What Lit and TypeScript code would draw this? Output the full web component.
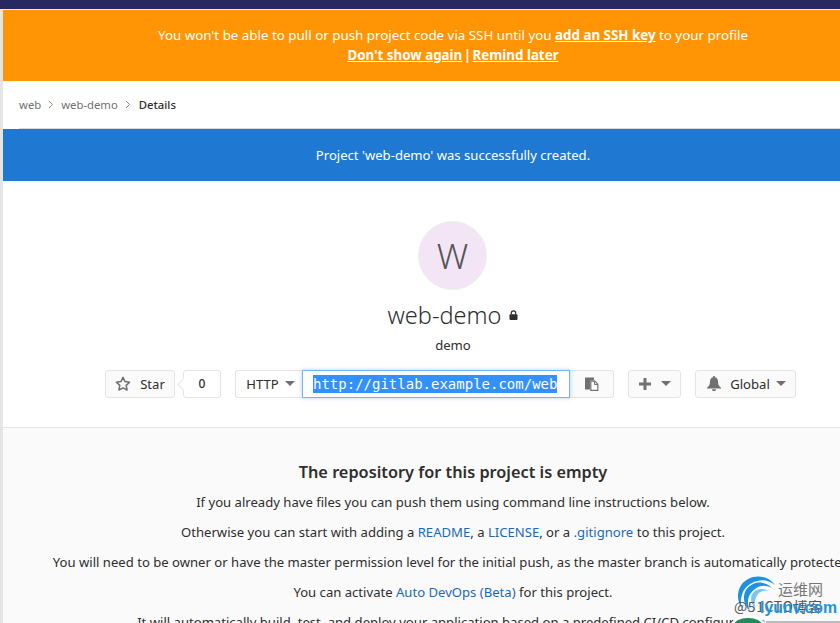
import { LitElement, html, css } from "lit";
import { customElement } from "lit/decorators.js";

const caret = html`<svg class="caret" width="10" height="5" viewBox="0 0 10 5"><path d="M0 0h10L5 5z" fill="#707070"/></svg>`;

@customElement("app-root")
export class AppRoot extends LitElement {
  static styles = css`
    :host { display: block; width: 840px; height: 623px; overflow: hidden; position: relative; background: #fff;
      font-family: "Noto Sans", "Open Sans", sans-serif; color: #2e2e2e; font-size: 13.1px; }
    .top { height: 9px; background: #292961; border-bottom: 1px solid #f0f0f0; }
    .page { width: 900px; margin-left: 3px; position: relative; }
    .edge { position: absolute; left: 0; top: 10px; width: 3px; height: 613px; background: #e5e5e5; }
    .warn { height: 71px; background: #ff9505; color: #fff; display: flex; flex-direction: column; align-items: center; width: 900px; padding-top: 15px; box-sizing: border-box; line-height: 20px; font-size: 13.35px; }
    .warn a { color: #fff; font-weight: 700; text-decoration: underline; }
    .pipe { margin: 0 -2px; font-weight: 700; }
    .crumbs { height: 48px; margin-left: 16px; width: 884px; box-sizing: border-box; border-bottom: 1px solid #d8d8d8; display: flex; align-items: center; gap: 6px; font-size: 11.3px; color: #707070; }
    .crumbs b { font-weight: 500; color: #2e2e2e; margin-left: 1px; }
    .chev { margin: 0 1px; }
    .flash { height: 52px; width: 900px; background: #1f78d1; color: #fff; display: flex; align-items: center; justify-content: center; }
    .head { height: 246px; display: flex; flex-direction: column; align-items: center; box-sizing: border-box; padding-top: 40px; }
    .avatar { box-sizing: border-box; width: 69px; height: 69px; border-radius: 50%; background: #f3e5f5; border: 1px solid #eee; color: #555; display: flex; align-items: center; justify-content: center; font-size: 35px; font-weight: 300; margin-right: 1px; }
    .title { display: flex; align-items: center; gap: 8px; font-size: 23.5px; line-height: 32px; margin-top: 9px; color: #2e2e2e; font-weight: 300; }
    .desc { margin-top: 4px; line-height: 20px; color: #2e2e2e; }
    .actions { display: flex; margin-top: 15px; height: 28px; margin-left: -5px; }
    .btn { box-sizing: border-box; height: 28px; display: flex; align-items: center; justify-content: center; border: 1px solid #e5e5e5; border-radius: 3px; background: #fafafa; color: #2e2e2e; font-size: 13.1px; padding-bottom: 1px; }
    .star { width: 70px; gap: 9px; }
    .count { width: 38px; margin-left: 8px; background: #fff; position: relative; font-size: 12px; font-weight: 500; }
    .count::before { content: ""; position: absolute; left: -5px; top: 9px; width: 8px; height: 8px; background: #fff; border-left: 1px solid #e5e5e5; border-bottom: 1px solid #e5e5e5; transform: rotate(45deg); }
    .http { width: 67px; margin-left: 14px; gap: 6px; background: #fff; border-radius: 3px 0 0 3px; border-right: none; padding-left: 3px; }
    .url { box-sizing: border-box; width: 268px; height: 28px; border: 1px solid #73b5f5; box-shadow: 0 0 4px rgba(31,120,209,.35); background: #fff; display: flex; align-items: center; padding-left: 10px; font-family: "DejaVu Sans Mono", monospace; font-size: 14px; color: #fff; position: relative; overflow: hidden; white-space: nowrap; }
    .url span { background: #3390ff; line-height: 18px; }
    .copy { width: 44px; border-left: none; border-radius: 0 3px 3px 0; }
    .plus { width: 53px; margin-left: 14px; gap: 10px; }
    .global { width: 101px; margin-left: 14px; gap: 6px; padding-left: 2px; }
    .bell { margin-right: 3px; }
    .empty { width: 900px; height: 196px; box-sizing: border-box; background: #fafafa; border-top: 1px solid #e5e5e5; position: relative; }
    .inner { width: 900px; display: flex; flex-direction: column; align-items: center; padding-top: 32px; }
    h4 { margin: 0 0 8px; font-size: 16.3px; font-weight: 600; line-height: 24px; color: #2e2e2e; }
    p { margin: 0 0 10px; line-height: 20px; white-space: nowrap; color: #2e2e2e; }
    p a { color: #1b69b6; }
    .mark { position: absolute; left: 733px; top: 575px; width: 107px; height: 48px; pointer-events: none; font-family: "Noto Sans CJK SC", sans-serif; }
    .mark svg { position: absolute; left: 0; top: 0; }
    .m1 { position: absolute; left: 45px; top: 5px; font-size: 15px; line-height: 18px; color: #777; white-space: nowrap; }
    .m2 { position: absolute; left: 1px; top: 22px; font-size: 14px; line-height: 18px; color: #555; white-space: nowrap; letter-spacing: .6px; }
    .m3 { position: absolute; left: 27px; top: 24px; font: 700 15.8px/18px "Liberation Sans", sans-serif; color: #1b93e0; white-space: nowrap; }
  `;

  render() {
    return html`
      <div class="top"></div>
      <div class="edge"></div>
      <div class="page">
        <div class="warn">
          <div>You won't be able to pull or push project code via SSH until you <a>add an SSH key</a> to your profile</div>
          <div><a>Don't show again</a> <span class="pipe">|</span> <a>Remind later</a></div>
        </div>
        <div class="crumbs">
          <span>web</span>
          <svg class="chev" width="6" height="9" viewBox="0 0 6 9"><path d="M1 1l3.500 3.500L1 8" fill="none" stroke="#888" stroke-width="1"/></svg>
          <span>web-demo</span>
          <svg class="chev" width="6" height="9" viewBox="0 0 6 9"><path d="M1 1l3.500 3.500L1 8" fill="none" stroke="#888" stroke-width="1"/></svg>
          <b>Details</b>
        </div>
        <div class="flash">Project 'web-demo' was successfully created.</div>
        <div class="head">
          <div class="avatar">W</div>
          <div class="title">web-demo
            <svg width="9" height="10" viewBox="0 0 9 10"><path d="M2.300 4.500V3a2.200 2.200 0 0 1 4.400 0v1.500" fill="none" stroke="#2e2e2e" stroke-width="1.200"/><rect x="0.500" y="4.200" width="8" height="5.800" rx="1" fill="#2e2e2e"/></svg>
          </div>
          <div class="desc">demo</div>
          <div class="actions">
            <div class="btn star">
              <svg width="16" height="15" viewBox="0 0 16 15"><path d="M8 1.400l2 4.200 4.600.6-3.400 3.200.9 4.600L8 11.800 3.900 14l.9-4.600L1.400 6.200 6 5.600z" fill="none" stroke="#707070" stroke-width="1.500" stroke-linejoin="round"/></svg>
              Star
            </div>
            <div class="btn count">0</div>
            <div class="btn http">HTTP ${caret}</div>
            <div class="url"><span>http://gitlab.example.com/web</span></div>
            <div class="btn copy">
              <svg width="15" height="15" viewBox="0 0 15 15"><path d="M1 1.500h9v3H6v9H1z" fill="#707070"/><path d="M6.800 5.200h4l3 3v6.100h-7z" fill="#fff" stroke="#707070" stroke-width="1.200"/><path d="M10.500 5.200v3.300h3.300" fill="none" stroke="#707070"/></svg>
            </div>
            <div class="btn plus">
              <svg width="12" height="12" viewBox="0 0 12 12"><path d="M4.500 0h3v4.500H12v3H7.500V12h-3V7.500H0v-3h4.500z" fill="#707070"/></svg>
              ${caret}
            </div>
            <div class="btn global">
              <svg class="bell" width="14" height="15" viewBox="0 0 14 15"><path d="M7 0a1 1 0 0 1 1 1.200C10 1.700 11 3.400 11 5.500c0 3.200 1 4.700 3 6.300v.7H0v-.7c2-1.600 3-3.100 3-6.300 0-2.100 1-3.800 3-4.300A1 1 0 0 1 7 0zM5 13.300h4a2 2 0 0 1-4 0z" fill="#707070"/></svg>
              Global ${caret}
            </div>
          </div>
        </div>
        <div class="empty">
          <div class="inner">
            <h4>The repository for this project is empty</h4>
            <p>If you already have files you can push them using command line instructions below.</p>
            <p>Otherwise you can start with adding a <a>README</a>, a <a>LICENSE</a>, or a <a>.gitignore</a> to this project.</p>
            <p>You will need to be owner or have the master permission level for the initial push, as the master branch is automatically protected.</p>
            <p>You can activate <a>Auto DevOps (Beta)</a> for this project.</p>
            <p>It will automatically build, test, and deploy your application based on a predefined CI/CD configuration.</p>
          </div>
        </div>
      </div>
      <div class="mark">
        <svg width="107" height="48" viewBox="0 0 107 48">
          <path d="M9 34C1 22 5 6 20 2c9-2 17 1 22 8C35 4 26 4 19 8 9 13 6 24 9 34z" fill="#1b93e0"/>
          <path d="M17 36C8 28 9 14 20 9c7-3 14-1 19 4-6-3-12-3-17 1-7 5-9 13-5 22z" fill="#1b93e0"/>
          <path d="M22 33c-6-6-5-15 2-18 4-2 8-1 12 1-5-.5-9 0-11 3-3 4-4 9-3 14z" fill="#7cc4ee"/>
          <ellipse cx="15" cy="50" rx="17" ry="9" fill="#fff"/>
          <ellipse cx="15" cy="50" rx="14" ry="7" fill="#1f8a5a"/>
          <rect x="33" y="46" width="74" height="2" fill="#bbb"/>
        </svg>
        <div class="m1">运维网</div>
        <div class="m2">@51CTO博客</div>
        <div class="m3">lyunv.com</div>
      </div>
    `;
  }
}
